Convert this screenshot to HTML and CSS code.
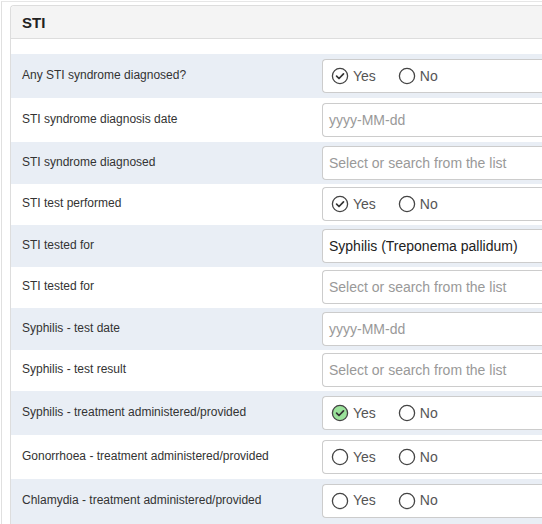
FILE: index.html
```html
<!DOCTYPE html>
<html>
<head>
<meta charset="utf-8">
<link rel="stylesheet" href="styles.css">
</head>
<body>
<div class="outer">
  <div class="panel">
    <div class="panel-head">STI</div>
    <div class="panel-body">
      <div class="row alt tall">
        <div class="label">Any STI syndrome diagnosed?</div>
        <div class="field radios">
          <span class="opt"><svg class="rb" viewBox="0 0 18 18"><circle cx="9" cy="9" r="7.6" class="ring"/><path d="M5.6 9.2 L8 11.5 L12.5 6.8" class="tick"/></svg>Yes</span>
          <span class="opt"><svg class="rb" viewBox="0 0 18 18"><circle cx="9" cy="9" r="7.6" class="ring"/></svg>No</span>
        </div>
      </div>
      <div class="row tall">
        <div class="label">STI syndrome diagnosis date</div>
        <div class="field input placeholder">yyyy-MM-dd</div>
      </div>
      <div class="row alt">
        <div class="label">STI syndrome diagnosed</div>
        <div class="field input placeholder">Select or search from the list</div>
      </div>
      <div class="row">
        <div class="label">STI test performed</div>
        <div class="field radios">
          <span class="opt"><svg class="rb" viewBox="0 0 18 18"><circle cx="9" cy="9" r="7.6" class="ring"/><path d="M5.6 9.2 L8 11.5 L12.5 6.8" class="tick"/></svg>Yes</span>
          <span class="opt"><svg class="rb" viewBox="0 0 18 18"><circle cx="9" cy="9" r="7.6" class="ring"/></svg>No</span>
        </div>
      </div>
      <div class="row alt">
        <div class="label">STI tested for</div>
        <div class="field input">Syphilis (Treponema pallidum)</div>
      </div>
      <div class="row">
        <div class="label">STI tested for</div>
        <div class="field input placeholder">Select or search from the list</div>
      </div>
      <div class="row alt">
        <div class="label">Syphilis - test date</div>
        <div class="field input placeholder">yyyy-MM-dd</div>
      </div>
      <div class="row">
        <div class="label">Syphilis - test result</div>
        <div class="field input placeholder">Select or search from the list</div>
      </div>
      <div class="row alt tall">
        <div class="label">Syphilis - treatment administered/provided</div>
        <div class="field radios">
          <span class="opt"><svg class="rb" viewBox="0 0 18 18"><circle cx="9" cy="9" r="7.6" class="ring green"/><path d="M5.6 9.2 L8 11.5 L12.5 6.8" class="tick"/></svg>Yes</span>
          <span class="opt"><svg class="rb" viewBox="0 0 18 18"><circle cx="9" cy="9" r="7.6" class="ring"/></svg>No</span>
        </div>
      </div>
      <div class="row tall">
        <div class="label">Gonorrhoea - treatment administered/provided</div>
        <div class="field radios">
          <span class="opt"><svg class="rb" viewBox="0 0 18 18"><circle cx="9" cy="9" r="7.6" class="ring"/></svg>Yes</span>
          <span class="opt"><svg class="rb" viewBox="0 0 18 18"><circle cx="9" cy="9" r="7.6" class="ring"/></svg>No</span>
        </div>
      </div>
      <div class="row alt last">
        <div class="label">Chlamydia - treatment administered/provided</div>
        <div class="field radios">
          <span class="opt"><svg class="rb" viewBox="0 0 18 18"><circle cx="9" cy="9" r="7.6" class="ring"/></svg>Yes</span>
          <span class="opt"><svg class="rb" viewBox="0 0 18 18"><circle cx="9" cy="9" r="7.6" class="ring"/></svg>No</span>
        </div>
      </div>
    </div>
  </div>
</div>
</body>
</html>
```
FILE: styles.css
```css
html, body {
  margin: 0;
  padding: 0;
  overflow: hidden;
  background: #fff;
  font-family: "Liberation Sans", Arial, sans-serif;
  color: #333;
}
.outer {
  margin: 1px 0 0 1px;
  border-top: 1px solid #e6e6e6;
  border-left: 1px solid #e0e0e0;
  padding: 3px 0 0 8px;
}
.panel {
  border-top: 1px solid #dddddd;
  border-left: 1px solid #dddddd;
  border-radius: 4px 0 0 0;
}
.panel-head {
  height: 32px;
  background: #f4f4f4;
  border-bottom: 1px solid #dddddd;
  border-radius: 4px 0 0 0;
  padding-left: 11px;
  display: flex;
  align-items: center;
  font-size: 15px;
  font-weight: bold;
  color: #222;
}
.panel-body {
  padding-top: 15px;
}
.row {
  display: flex;
  align-items: center;
  height: 41.5px;
  background: #fff;
}
.row.tall {
  height: 44px;
}
.row.last {
  height: 43px;
  padding-bottom: 3px;
}
.row.alt {
  background: #e9eef5;
}
.label {
  flex: 0 0 300px;
  padding-left: 11px;
  font-size: 12px;
  color: #333;
  margin-top: -2px;
}
.field {
  box-sizing: border-box;
  flex: 1;
  min-width: 0;
  height: 34px;
  background: #fff;
  border: 1px solid #cccccc;
  border-right: none;
  border-radius: 4px 0 0 4px;
  display: flex;
  align-items: center;
  font-size: 14px;
  color: #222;
  white-space: nowrap;
}
.input {
  padding-left: 6px;
}
.placeholder {
  color: #999;
}
.radios {
  padding-left: 8px;
  gap: 22px;
  color: #555;
}
.opt {
  display: flex;
  align-items: center;
  gap: 4px;
  margin-top: -1px;
}
.rb {
  width: 18px;
  height: 18px;
  margin-top: 1px;
}
.ring {
  fill: #fff;
  stroke: #444;
  stroke-width: 1.3;
}
.ring.green {
  fill: #9be39b;
}
.tick {
  fill: none;
  stroke: #333;
  stroke-width: 1.7;
  stroke-linecap: round;
  stroke-linejoin: round;
}
```
